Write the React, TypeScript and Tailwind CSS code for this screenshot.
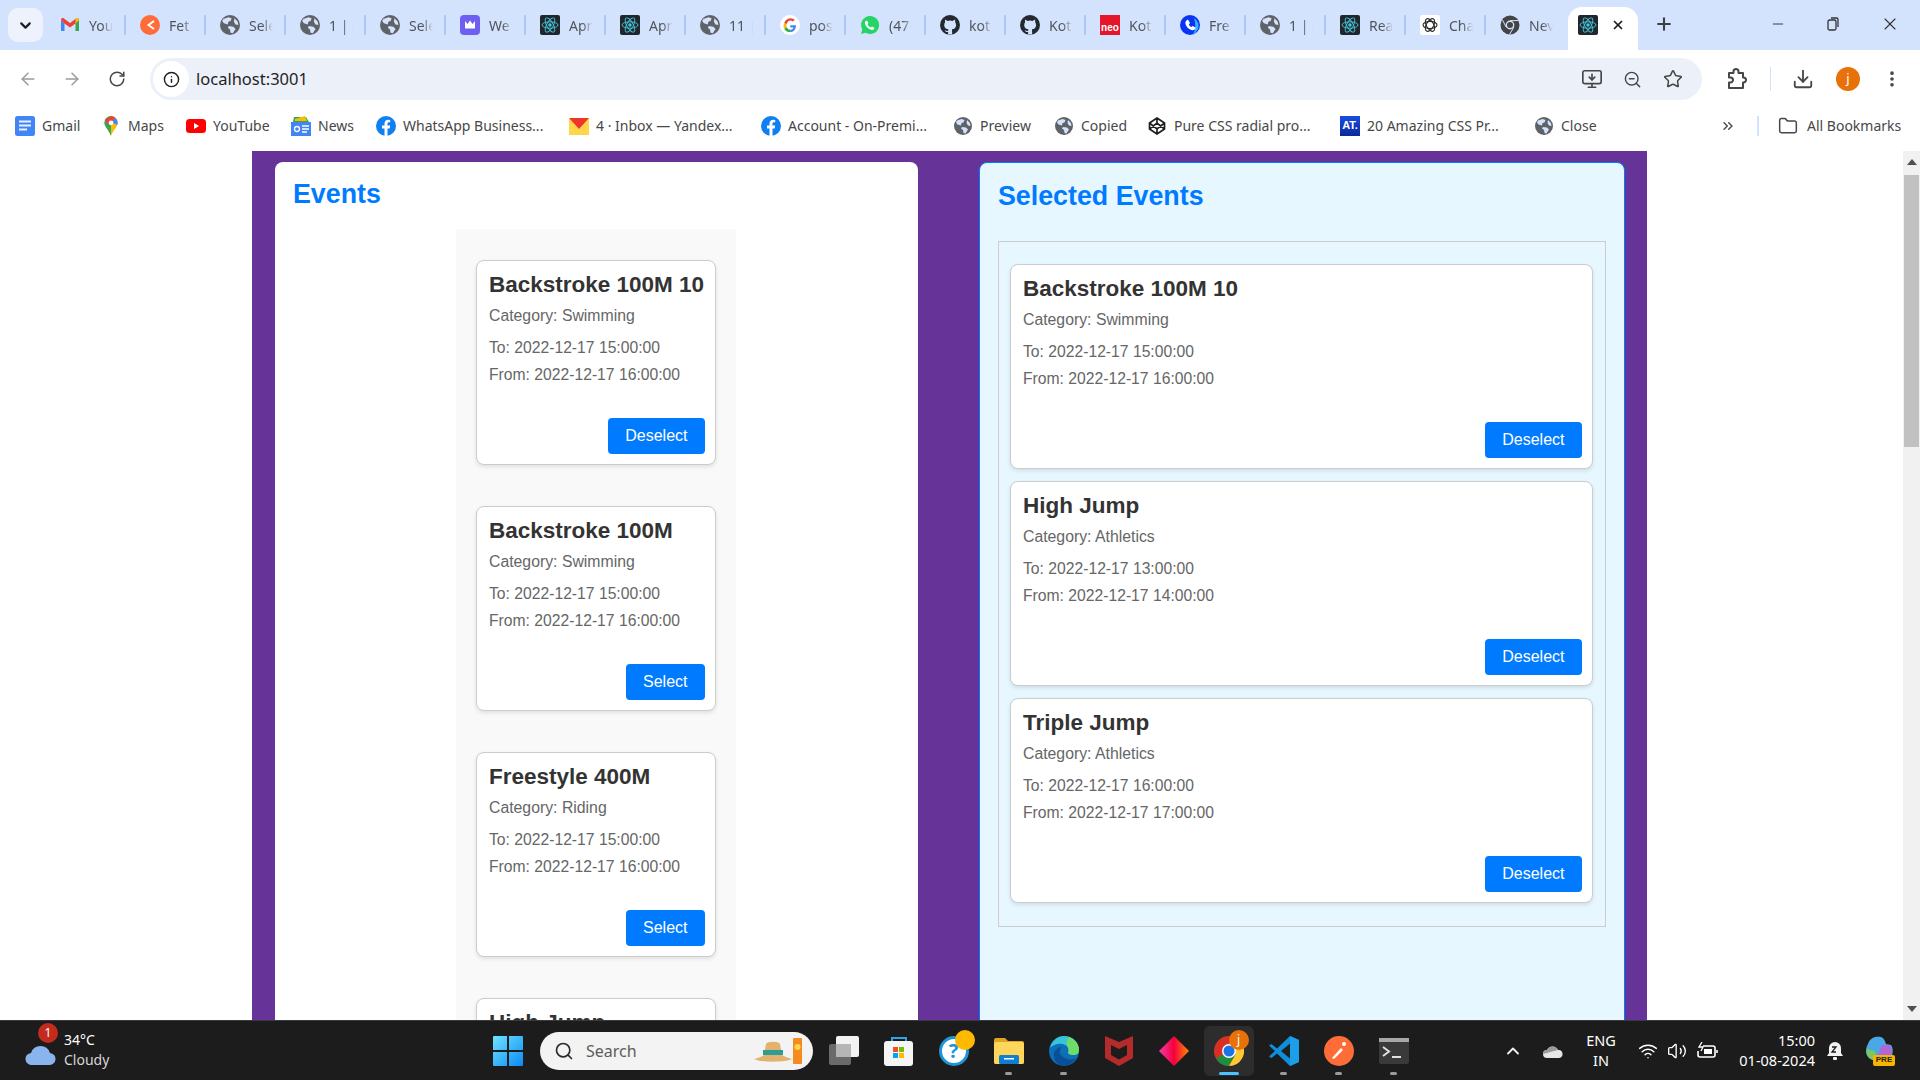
import type { ReactNode } from "react";
import {
  ArrowLeft,
  ArrowRight,
  ChevronDown,
  ChevronsRight,
  ChevronUp,
  Download,
  EllipsisVertical,
  Folder,
  Info,
  Minus,
  MonitorDown,
  Plus,
  RotateCw,
  Search,
  Star,
  Volume2,
  Wifi,
  X,
  ZoomOut,
} from "lucide-react";

const uiFont = "font-['Noto_Sans',sans-serif]";

function Globe({ size = 18 }: { size?: number }) {
  return (
    <svg width={size} height={size} viewBox="0 0 18 18">
      <circle cx="9" cy="9" r="9" fill="#5f6368" />
      <path d="M3 3.5 7.5 2l3 1-1 2.5-2 .5L7 8.5 3.5 7.5 2 5.5ZM8 10l4 .5 2 2-2.5 4-2-.5-.5-3-2-1.5ZM13 3l3 3 .5 3-2.5-.5-1.5-2.5Z" fill="#d3e3fd" />
    </svg>
  );
}

function ReactIcon({ size = 20 }: { size?: number }) {
  return (
    <svg width={size} height={size} viewBox="0 0 20 20" className="rounded-[2px] bg-[#20262b]">
      <g fill="none" stroke="#45c8dc" strokeWidth="0.9">
        <ellipse cx="10" cy="10" rx="8" ry="3.2" />
        <ellipse cx="10" cy="10" rx="8" ry="3.2" transform="rotate(60 10 10)" />
        <ellipse cx="10" cy="10" rx="8" ry="3.2" transform="rotate(120 10 10)" />
      </g>
      <circle cx="10" cy="10" r="1.7" fill="#45c8dc" />
    </svg>
  );
}

function GmailIcon() {
  return (
    <svg width="20" height="20" viewBox="0 0 20 20">
      <path d="M1 5v11h3.5V8.5Z" fill="#4285f4" />
      <path d="M19 5v11h-3.5V8.5Z" fill="#34a853" />
      <path d="M1 5c0-1.8 1.8-2.4 3-1.5L10 8l6-4.5c1.2-.9 3-.3 3 1.5l-3.5 3.5L10 12.5 4.5 8.5Z" fill="#ea4335" />
      <path d="M15.5 8.5 19 5c0-1.8-1.8-2.4-3-1.5l-.5.4Z" fill="#fbbc04" />
    </svg>
  );
}

function OrangeIcon() {
  return (
    <svg width="20" height="20" viewBox="0 0 20 20">
      <circle cx="10" cy="10" r="10" fill="#ff6c37" />
      <path d="M14 6 8.5 10l5.5 4" fill="none" stroke="#fff" strokeWidth="2" />
    </svg>
  );
}

function CrownIcon() {
  return (
    <svg width="20" height="20" viewBox="0 0 20 20">
      <rect width="20" height="20" rx="4" fill="#6f5ff0" />
      <path d="M5 6l2.5 3L10 5.500 12.500 9 15 6v7.500H5Z" fill="#fff" />
    </svg>
  );
}

function GoogleIcon() {
  return (
    <svg width="20" height="20" viewBox="0 0 20 20">
      <circle cx="10" cy="10" r="10" fill="#fff" />
      <path d="M16 10.200h-5.700v2.300h3.200c-.5 1.500-1.700 2.200-3.300 2.200V17c2.800 0 5.800-2 5.800-6.800Z" fill="#4285f4" />
      <path d="M10.200 14.700c-1.700 0-3.100-1.100-3.600-2.600l-2.300 1.800c1 2 3.300 3.100 5.900 3.100Z" fill="#34a853" />
      <path d="M6.600 12.100a4.400 4.400 0 0 1 0-2.800L4.300 7.500a7 7 0 0 0 0 6.400Z" fill="#fbbc04" />
      <path d="M10.200 5.600c1.100 0 2 .4 2.700 1l1.900-1.900A6.700 6.700 0 0 0 4.300 7.500l2.300 1.800c.5-2 2-3.700 3.600-3.700Z" fill="#ea4335" />
    </svg>
  );
}

function WhatsAppIcon() {
  return (
    <svg width="20" height="20" viewBox="0 0 20 20">
      <path d="M10 1a9 9 0 0 0-7.700 13.500L1 19l4.600-1.200A9 9 0 1 0 10 1Z" fill="#25d366" />
      <path d="M7 5.500 8.500 8l-1 1.200c.7 1.500 1.800 2.600 3.300 3.300l1.200-1 2.500 1.500c-.3 1.700-2 2.300-3.500 1.800-3-1-5-3-6-6-.4-1.400.3-2.900 2-3.300Z" fill="#fff" />
    </svg>
  );
}

function GithubIcon() {
  return (
    <svg width="20" height="20" viewBox="0 0 20 20">
      <circle cx="10" cy="10" r="10" fill="#24292f" />
      <path d="M5 4.500 7.500 6a8 8 0 0 1 5 0L15 4.500l.3 3c1.200 1.500 1 4.500-.5 5.700-.7.600-1.600.9-2.800 1l.2 5.300H8l.2-2.500c-2 .3-3-.5-3.500-2 1 .3 2 1.500 3.500.8l.1-1.600c-1.200-.1-2.100-.4-2.800-1C4 12 3.800 9 5 7.500Z" fill="#d3e3fd" />
    </svg>
  );
}

function NeoIcon() {
  return (
    <span className="flex h-[20px] w-[20px] items-end justify-center bg-[#e3162b] pb-[1px] font-['Liberation_Sans',sans-serif] text-[10px] font-bold leading-[12px] text-white">
      neo
    </span>
  );
}

function PhoneIcon() {
  return (
    <svg width="20" height="20" viewBox="0 0 20 20">
      <circle cx="10" cy="10" r="10" fill="#0a35f0" />
      <path d="M14 3a10 10 0 0 1 4 11l-3 4a10 10 0 0 1-3 2c4-3 4-11 2-17Z" fill="#35b5ff" />
      <path d="M8 4.500 10 8l-1.200 1.500c.5 1.200 1.300 2 2.500 2.500L12.800 11l3 1.700c-.3 2-2.400 3-4.500 2.200C8.300 13.800 6.500 12 5.500 9 5 7 6 5 8 4.500Z" fill="#fff" />
    </svg>
  );
}

function OpenAiIcon() {
  return (
    <svg width="20" height="20" viewBox="0 0 20 20" className="rounded-[2px] bg-white">
      <g fill="none" stroke="#2b2b2b" strokeWidth="1.100">
        <ellipse cx="10" cy="10" rx="7" ry="3.600" />
        <ellipse cx="10" cy="10" rx="7" ry="3.600" transform="rotate(60 10 10)" />
        <ellipse cx="10" cy="10" rx="7" ry="3.600" transform="rotate(120 10 10)" />
      </g>
    </svg>
  );
}

function ChromeMono() {
  return (
    <svg width="20" height="20" viewBox="0 0 20 20">
      <circle cx="10" cy="10" r="9.500" fill="#444" />
      <circle cx="10" cy="10" r="4.400" fill="#d3e3fd" />
      <circle cx="10" cy="10" r="3" fill="#444" />
      <path d="M10 5.600h8.500M6.200 12.200 2.500 5M13.800 12.200 9.500 19.500" stroke="#d3e3fd" strokeWidth="1" />
    </svg>
  );
}

const tabs: { label: string; icon: ReactNode }[] = [
  { label: "You", icon: <GmailIcon /> },
  { label: "Fet", icon: <OrangeIcon /> },
  { label: "Sele", icon: <Globe size={20} /> },
  { label: "1 | (", icon: <Globe size={20} /> },
  { label: "Sele", icon: <Globe size={20} /> },
  { label: "We", icon: <CrownIcon /> },
  { label: "Apr", icon: <ReactIcon /> },
  { label: "Apr", icon: <ReactIcon /> },
  { label: "11 |", icon: <Globe size={20} /> },
  { label: "pos", icon: <GoogleIcon /> },
  { label: "(47", icon: <WhatsAppIcon /> },
  { label: "kot", icon: <GithubIcon /> },
  { label: "Kot", icon: <GithubIcon /> },
  { label: "Kot", icon: <NeoIcon /> },
  { label: "Fre", icon: <PhoneIcon /> },
  { label: "1 | (", icon: <Globe size={20} /> },
  { label: "Rea", icon: <ReactIcon /> },
  { label: "Cha", icon: <OpenAiIcon /> },
  { label: "Nev", icon: <ChromeMono /> },
];

function TabStrip() {
  return (
    <div className={`flex h-[50px] items-end bg-[#d3e3fd] ${uiFont}`}>
      <div className="mb-[8px] ml-2 mr-[3px] flex h-[34px] w-[35px] items-center justify-center rounded-[10px] bg-[#edf2fd]">
        <ChevronDown size={17} strokeWidth={3} className="text-[#1f1f1f]" />
      </div>
      {tabs.map((tab, i) => (
        <div key={i} className="mb-[8px] flex h-[34px] w-[80px] items-center pl-[14px]">
          <span className="flex w-[20px] shrink-0 justify-center">{tab.icon}</span>
          <span className="ml-[9px] w-[24px] overflow-hidden whitespace-nowrap text-[14px] text-[#50545a] [mask-image:linear-gradient(to_right,black_55%,transparent)]">
            {tab.label}
          </span>
          {i < tabs.length - 1 && (
            <span className="ml-[11px] h-[20px] w-[2px] shrink-0 rounded bg-[#a8c7fa]" />
          )}
        </div>
      ))}
      <div className="ml-[2px] flex h-[43px] w-[70px] items-center rounded-t-[14px] bg-white pb-[7px] pl-[10px]">
        <ReactIcon />
        <X size={14} strokeWidth={3} className="ml-[13px] text-[#1f1f1f]" />
      </div>
      <Plus size={20} strokeWidth={2.5} className="mb-[16px] ml-[16px] text-[#3c4043]" />
      <div className="mb-[16px] ml-[96px] flex items-center text-[#333]">
        <Minus size={16} strokeWidth={1.4} />
        <svg width="14" height="14" viewBox="0 0 14 14" className="ml-[40px]" fill="none" stroke="#333" strokeWidth="1.300">
          <rect x="2" y="3" width="8" height="10" rx="1.5" />
          <path d="M5 1h5.500A1.500 1.500 0 0 1 12 2.500V10" />
        </svg>
        <X size={20} strokeWidth={1.3} className="ml-[40px]" />
      </div>
    </div>
  );
}

function ExtensionIcon() {
  return (
    <svg width="22" height="24" viewBox="0 0 22 24" fill="none" stroke="#474747" strokeWidth="2" className="ml-[24px]">
      <path d="M3 6h4.500V4.500a2.500 2.500 0 0 1 5 0V6H17v4.500h.5a2.500 2.500 0 0 1 0 5H17V21H3v-5.500h1.500a2.500 2.500 0 0 0 0-5H3Z" strokeLinejoin="round" />
    </svg>
  );
}

function Toolbar() {
  return (
    <div className={`flex h-[50px] items-center bg-white pt-[8px] ${uiFont}`}>
      <ArrowLeft size={20} strokeWidth={1.8} className="ml-[18px] text-[#9a9b9d]" />
      <ArrowRight size={20} strokeWidth={1.8} className="ml-[24px] text-[#9a9b9d]" />
      <RotateCw size={18} strokeWidth={2} className="ml-[26px] text-[#474747]" />
      <div className="ml-[24px] flex h-[42px] w-[1552px] items-center rounded-full bg-[#ecf0f8]">
        <div className="ml-[3px] flex h-[36px] w-[36px] items-center justify-center rounded-full bg-white">
          <Info size={17} strokeWidth={2} className="text-[#1f1f1f]" />
        </div>
        <span className="ml-[7px] text-[16.5px] text-[#1f1f1f]">localhost:3001</span>
        <MonitorDown size={22} strokeWidth={1.8} className="ml-auto text-[#474747]" />
        <ZoomOut size={19} strokeWidth={1.8} className="ml-[20px] text-[#474747]" />
        <Star size={20} strokeWidth={1.8} className="ml-[21px] mr-[19px] text-[#474747]" />
      </div>
      <ExtensionIcon />
      <span className="ml-[22px] h-[24px] w-px bg-[#d3e3fd]" />
      <Download size={22} strokeWidth={2} className="ml-[21px] text-[#474747]" />
      <div className="ml-[22px] flex h-[24px] w-[24px] items-center justify-center rounded-full bg-[#e8710a] text-[13px] text-white">
        j
      </div>
      <EllipsisVertical size={20} strokeWidth={2.4} className="ml-[22px] text-[#474747]" />
    </div>
  );
}

function DocIcon() {
  return (
    <svg width="20" height="20" viewBox="0 0 20 20">
      <rect width="20" height="20" rx="2.5" fill="#4285f4" />
      <path d="M4 5.500h12M4 9.500h12M4 13.500h8" stroke="#e8f0fe" strokeWidth="1.800" />
    </svg>
  );
}

function MapsIcon() {
  return (
    <svg width="20" height="20" viewBox="0 0 20 20">
      <path d="M10 0a6.700 6.700 0 0 0-6.700 6.700C3.300 11 8 14 10 20Z" fill="#34a853" />
      <path d="M10 0a6.700 6.700 0 0 1 6.700 6.700C16.700 11 12 14 10 20Z" fill="#fbbc04" />
      <path d="M4 3.500 10 0c2 0 3.500 1 4.500 2L7 9Z" fill="#ea4335" />
      <path d="M14.500 2c2 2 2.700 4.500 1.800 7L10 6Z" fill="#4285f4" />
      <circle cx="10" cy="6.800" r="2.400" fill="#fff" />
    </svg>
  );
}

function YoutubeIcon() {
  return (
    <svg width="20" height="20" viewBox="0 0 20 20">
      <rect y="3" width="20" height="14" rx="3.5" fill="#f00" />
      <path d="M8 7l5.200 3L8 13Z" fill="#fff" />
    </svg>
  );
}

function NewsIcon() {
  return (
    <svg width="20" height="20" viewBox="0 0 20 20">
      <path d="M2 6 3 1h12l3 5Z" fill="#34a853" />
      <path d="M4 3 14 0l2 5H4Z" fill="#fbbc04" />
      <rect y="6" width="20" height="14" fill="#4285f4" />
      <path d="M11 10h7M11 13h7M11 16h5" stroke="#fff" strokeWidth="1.300" />
      <circle cx="6" cy="13" r="2.5" fill="none" stroke="#fff" strokeWidth="1.300" />
    </svg>
  );
}

function FacebookIcon() {
  return (
    <svg width="20" height="20" viewBox="0 0 20 20">
      <circle cx="10" cy="10" r="10" fill="#0f7ff2" />
      <path d="M8.500 20v-7.500H6V9.500h2.500V7.500c0-2.500 1.500-3.800 3.700-3.800l2 .2V6.300h-1.200c-1.200 0-1.500.7-1.500 1.500v1.700h2.700l-.5 3h-2.200V20Z" fill="#fff" />
    </svg>
  );
}

function YandexIcon() {
  return (
    <svg width="20" height="20" viewBox="0 0 20 20">
      <rect y="2" width="20" height="17" fill="#ffd54a" />
      <path d="M0 2h20L10 13Z" fill="#f1352b" />
    </svg>
  );
}

function CodepenIcon() {
  return (
    <svg width="18" height="18" viewBox="0 0 18 18" fill="none" stroke="#1f1f1f" strokeWidth="1.700">
      <path d="M9 1l7.500 5v6L9 17l-7.500-5V6ZM9 1v5M9 12v5M1.500 6 9 12l7.500-6M1.500 12 9 6l7.500 6" />
    </svg>
  );
}

function AtIcon() {
  return (
    <span className="flex h-[20px] w-[20px] items-center justify-center bg-gradient-to-b from-[#1a4de0] to-[#0a2a9a] font-['Liberation_Sans',sans-serif] text-[11px] font-bold text-white">
      AT.
    </span>
  );
}

const bookmarks: { label: string; width: string; icon: ReactNode }[] = [
  { label: "Gmail", width: "w-[86px]", icon: <DocIcon /> },
  { label: "Maps", width: "w-[85px]", icon: <MapsIcon /> },
  { label: "YouTube", width: "w-[105px]", icon: <YoutubeIcon /> },
  { label: "News", width: "w-[85px]", icon: <NewsIcon /> },
  { label: "WhatsApp Business...", width: "w-[193px]", icon: <FacebookIcon /> },
  { label: "4 · Inbox — Yandex...", width: "w-[192px]", icon: <YandexIcon /> },
  { label: "Account - On-Premi...", width: "w-[192px]", icon: <FacebookIcon /> },
  { label: "Preview", width: "w-[101px]", icon: <Globe /> },
  { label: "Copied", width: "w-[93px]", icon: <Globe /> },
  { label: "Pure CSS radial pro...", width: "w-[193px]", icon: <CodepenIcon /> },
  { label: "20 Amazing CSS Pr...", width: "w-[194px]", icon: <AtIcon /> },
  { label: "Close", width: "w-[100px]", icon: <Globe /> },
];

function BookmarksBar() {
  return (
    <div className={`flex h-[51px] items-center bg-white pl-[15px] ${uiFont}`}>
      {bookmarks.map((b) => (
        <div key={b.label} className={`flex items-center ${b.width}`}>
          <span className="flex w-[20px] shrink-0 justify-center">{b.icon}</span>
          <span className="ml-[7px] whitespace-nowrap text-[14px] text-[#474747]">{b.label}</span>
        </div>
      ))}
      <ChevronsRight size={16} strokeWidth={2} className="ml-[86px] text-[#474747]" />
      <span className="ml-[21px] h-[20px] w-[2px] bg-[#d3e3fd]" />
      <Folder size={20} strokeWidth={1.8} className="ml-[19px] text-[#474747]" />
      <span className="ml-[9px] whitespace-nowrap text-[14px] text-[#474747]">All Bookmarks</span>
    </div>
  );
}

interface EventItem {
  title: string;
  category: string;
  to: string;
  from: string;
  selected: boolean;
}

const events: EventItem[] = [
  { title: "Backstroke 100M 10", category: "Swimming", to: "2022-12-17 15:00:00", from: "2022-12-17 16:00:00", selected: true },
  { title: "Backstroke 100M", category: "Swimming", to: "2022-12-17 15:00:00", from: "2022-12-17 16:00:00", selected: false },
  { title: "Freestyle 400M", category: "Riding", to: "2022-12-17 15:00:00", from: "2022-12-17 16:00:00", selected: false },
  { title: "High Jump", category: "Athletics", to: "2022-12-17 13:00:00", from: "2022-12-17 14:00:00", selected: true },
];

const selectedEvents: EventItem[] = [
  events[0],
  events[3],
  { title: "Triple Jump", category: "Athletics", to: "2022-12-17 16:00:00", from: "2022-12-17 17:00:00", selected: true },
];

function EventCard({ event }: { event: EventItem }) {
  return (
    <div className="flex h-[205px] shrink-0 flex-col rounded-[8px] border border-[#cccccc] bg-white pb-[10px] pl-[10px] pr-[10px] pt-[11px] shadow-[0_2px_4px_rgba(0,0,0,0.1)]">
      <h3 className="h-[26px] whitespace-nowrap pl-[2px] text-[22.5px] font-bold leading-[26px] text-[#333333]">{event.title}</h3>
      <p className="mt-[8px] pl-[2px] text-[15.8px] leading-[20px] text-[#666666]">Category: {event.category}</p>
      <p className="mt-[12px] pl-[2px] text-[15.7px] leading-[20px] text-[#666666]">To: {event.to}</p>
      <p className="mt-[7px] pl-[2px] text-[15.7px] leading-[20px] text-[#666666]">From: {event.from}</p>
      <button
        type="button"
        className="ml-auto mt-auto h-[36px] rounded-[4px] bg-[#007bff] px-[17.5px] text-[16px] text-white"
      >
        {event.selected ? "Deselect" : "Select"}
      </button>
    </div>
  );
}

function EventsPage() {
  return (
    <div className="flex min-h-0 flex-1 overflow-hidden bg-white font-['Liberation_Sans',sans-serif]">
      <div className="ml-[252px] flex w-[1395px] items-start justify-between bg-[#663399] pl-[23px] pr-[22px] pt-[11px]">
        <section className="h-[1200px] w-[643px] rounded-t-[8px] bg-white px-[18px] pt-[17px]">
          <h2 className="text-[26.8px] font-bold leading-[30px] text-[#007bff]">Events</h2>
          <div className="ml-[163px] mt-[20px] flex w-[280px] flex-col gap-[41px] bg-[#f9f9f9] px-[20px] pb-[40px] pt-[31px]">
            {events.map((event) => (
              <EventCard key={event.title} event={event} />
            ))}
          </div>
        </section>
        <section className="h-[1200px] w-[646px] rounded-t-[8px] border border-[#007bff] bg-[#e6f7ff] px-[18px] pt-[18px]">
          <h2 className="text-[26.8px] font-bold leading-[30px] text-[#007bff]">Selected Events</h2>
          <div className="mt-[30px] flex flex-col gap-[12px] border border-[#cccccc] pb-[23px] pl-[11px] pr-[12px] pt-[22px]">
            {selectedEvents.map((event) => (
              <EventCard key={event.title} event={event} />
            ))}
          </div>
        </section>
      </div>
      <div className="ml-auto flex w-[17px] flex-col items-center bg-[#f1f1f1]">
        <span className="mt-[8px] h-0 w-0 border-x-[5px] border-b-[6px] border-x-transparent border-b-[#505050]" />
        <span className="mt-[10px] h-[272px] w-[15px] bg-[#c1c1c1]" />
        <span className="mb-[8px] mt-auto h-0 w-0 border-x-[5px] border-t-[6px] border-x-transparent border-t-[#505050]" />
      </div>
    </div>
  );
}

function StartIcon() {
  return (
    <svg width="30" height="30" viewBox="0 0 30 30">
      <defs>
        <linearGradient id="win" x1="0" y1="0" x2="1" y2="1">
          <stop offset="0" stopColor="#6fe3ff" />
          <stop offset="1" stopColor="#0a8bf5" />
        </linearGradient>
      </defs>
      <path d="M0 1a1 1 0 0 1 1-1h13v14H0ZM16 0h13a1 1 0 0 1 1 1v13H16ZM0 16h14v14H1a1 1 0 0 1-1-1ZM16 16h14v13a1 1 0 0 1-1 1H16Z" fill="url(#win)" />
    </svg>
  );
}

function TaskView() {
  return (
    <svg width="30" height="30" viewBox="0 0 30 30">
      <rect x="0" y="8" width="22" height="21" rx="2" fill="#6a6a6a" />
      <rect x="7" y="0" width="23" height="21" rx="2" fill="#f2f2f2" />
      <rect x="7" y="8" width="15" height="13" fill="#b5b5b5" />
    </svg>
  );
}

function StoreIcon() {
  return (
    <svg width="30" height="30" viewBox="0 0 30 30">
      <path d="M8 7V2h14v5" fill="none" stroke="#2ba5e8" strokeWidth="2" />
      <rect y="5" width="29" height="25" rx="3" fill="#f5f5f5" />
      <rect x="9" y="11" width="5" height="5" fill="#f25022" />
      <rect x="15" y="11" width="5" height="5" fill="#7fba00" />
      <rect x="9" y="17" width="5" height="5" fill="#00a4ef" />
      <rect x="15" y="17" width="5" height="5" fill="#ffb900" />
    </svg>
  );
}

function HelpIcon() {
  return (
    <span className="relative flex h-[30px] w-[30px] items-center justify-center rounded-full border-[3px] border-[#1c96d8] bg-white text-[20px] font-bold leading-none text-[#1c96d8]">
      ?
      <span className="absolute -right-[9px] -top-[9px] h-[20px] w-[20px] rounded-full bg-[#ffb900]" />
    </span>
  );
}

function FolderIcon() {
  return (
    <svg width="30" height="26" viewBox="0 0 30 26">
      <path d="M0 2a2 2 0 0 1 2-2h9l3 3h14a2 2 0 0 1 2 2v19a2 2 0 0 1-2 2H2a2 2 0 0 1-2-2Z" fill="#e0a526" />
      <rect y="4" width="30" height="22" rx="2" fill="#ffd65c" />
      <rect x="5" y="17" width="20" height="9" rx="1.5" fill="#0f7fd6" />
      <rect x="10" y="20" width="10" height="1.5" fill="#ffffff" />
    </svg>
  );
}

function EdgeIcon() {
  return (
    <svg width="30" height="30" viewBox="0 0 30 30">
      <circle cx="15" cy="15" r="15" fill="#0c6fb8" />
      <path d="M1 12C3 4 9 0 15 0c8 0 15 6 15 14 0 3-2 5-6 5-3 0-5-1-5-3 1-1 1-3 0-5-3-4-12-5-18 1Z" fill="#37c3d8" />
      <path d="M20 1c6 2 10 7 10 13 0 3-2 5-6 5-2 0-4-1-5-2 1-2 1-4-1-7-1-3 0-7 2-9Z" fill="#6fdc6a" />
      <path d="M14 30C8 29 4 24 5 17c1-3 4-6 8-6-3 2-3 8 1 10 4 3 10 3 13 1-3 5-8 8-13 8Z" fill="#0b4f98" />
    </svg>
  );
}

function McAfeeIcon() {
  return (
    <svg width="28" height="30" viewBox="0 0 28 30">
      <path d="M0 0l7 3 7 3 7-3 7-3v22l-14 8L0 22Zm6 9v10l8 4.500 8-4.500V9l-8 4Z" fill="#b52b2b" />
    </svg>
  );
}

function DiamondIcon() {
  return (
    <svg width="30" height="30" viewBox="0 0 30 30">
      <defs>
        <linearGradient id="dia" x1="0" y1="0" x2="1" y2="0">
          <stop offset="0" stopColor="#f53ca8" />
          <stop offset="0.5" stopColor="#f5003c" />
          <stop offset="1" stopColor="#ff8a00" />
        </linearGradient>
      </defs>
      <path d="M15 0l15 15-15 15L0 15Z" fill="url(#dia)" />
    </svg>
  );
}

function ChromeIcon() {
  return (
    <span className="relative flex h-[50px] w-[50px] flex-col items-center justify-center rounded-[6px] bg-[#2d2d2d]">
      <svg width="30" height="30" viewBox="0 0 30 30">
        <circle cx="15" cy="15" r="15" fill="#d93025" />
        <path d="M2 22.500A15 15 0 0 0 15 30l6.500-11.500h-12Z" fill="#1e8e3e" />
        <path d="M15 30A15 15 0 0 0 28 7.500H15l6.500 11Z" fill="#fcc934" />
        <circle cx="15" cy="15" r="7" fill="#fff" />
        <circle cx="15" cy="15" r="5.500" fill="#1a73e8" />
      </svg>
      <span className="absolute right-[5px] top-[4px] flex h-[20px] w-[20px] items-center justify-center rounded-full bg-[#e8710a] text-[12px] text-white">
        j
      </span>
      <span className="absolute bottom-[1px] h-[3px] w-[20px] rounded-full bg-[#4cc2ff]" />
    </span>
  );
}

function VsCodeIcon() {
  return (
    <svg width="30" height="30" viewBox="0 0 30 30">
      <path d="M21 0l9 4v22l-9 4L8 17.500 2.500 22 0 20.500 6 15 0 9.500 2.500 8 8 12.500Z" fill="#0e8fdc" />
      <path d="M21 7.500 12 15l9 7.500Z" fill="#1f1f1f" />
      <path d="M21 0l9 4v22l-9 4Z" fill="#1fa3ec" opacity="0.8" />
    </svg>
  );
}

function PostmanIcon() {
  return (
    <svg width="30" height="30" viewBox="0 0 30 30">
      <circle cx="15" cy="15" r="15" fill="#ff6c37" />
      <path d="M8 22l9-10 2 2-9 9Z" fill="#fff" />
      <circle cx="20" cy="8" r="2" fill="#fff" />
    </svg>
  );
}

function TerminalIcon() {
  return (
    <svg width="30" height="26" viewBox="0 0 30 26">
      <rect width="30" height="26" rx="2" fill="#3a3a3a" />
      <rect width="30" height="4" fill="#a8a8a8" />
      <path d="M4 9l6 4.500L4 18" fill="none" stroke="#e0e0e0" strokeWidth="2" />
      <rect x="13" y="18" width="9" height="2" fill="#e0e0e0" />
    </svg>
  );
}

const taskApps: { icon: ReactNode; running?: boolean }[] = [
  { icon: <TaskView /> },
  { icon: <StoreIcon /> },
  { icon: <HelpIcon /> },
  { icon: <FolderIcon />, running: true },
  { icon: <EdgeIcon />, running: true },
  { icon: <McAfeeIcon /> },
  { icon: <DiamondIcon /> },
  { icon: <ChromeIcon /> },
  { icon: <VsCodeIcon />, running: true },
  { icon: <PostmanIcon />, running: true },
  { icon: <TerminalIcon />, running: true },
];

function Taskbar() {
  return (
    <div className={`flex h-[60px] shrink-0 items-center border-t border-[#3a3a3a] bg-[#1c1c1c] text-white ${uiFont}`}>
      <div className="relative ml-[25px] flex w-[455px] items-center">
        <svg width="32" height="24" viewBox="0 0 32 24" className="mt-[4px]">
          <path d="M7 24a6 6 0 0 1-1-12 10 10 0 0 1 19 0 6 6 0 0 1-1 12Z" fill="#8ab4ee" />
        </svg>
        <span className="absolute -top-[7px] left-[13px] flex h-[20px] w-[20px] items-center justify-center rounded-full bg-[#c42b1c] text-[12px]">
          1
        </span>
        <div className="mb-[2px] ml-[7px] flex flex-col text-[14px] leading-[20px]">
          <span>34°C</span>
          <span className="text-[#d5d5d5]">Cloudy</span>
        </div>
      </div>
      <div className="flex w-[55px] justify-center">
        <StartIcon />
      </div>
      <div className="ml-[5px] flex h-[38px] w-[273px] items-center rounded-full bg-[#f3f3f3] pl-[14px]">
        <Search size={20} strokeWidth={2} className="text-[#2b2b2b]" />
        <span className="ml-[12px] text-[16px] text-[#5d5d5d]">Search</span>
        <svg width="48" height="30" viewBox="0 0 48 30" className="ml-auto mr-[11px]">
          <path d="M0 23c6-1 8-3 10-4l2-11c1-3 13-3 14 0l2 11c2 1 6 3 10 4-4 3-30 4-38 0Z" fill="#e3b26e" />
          <rect x="9" y="14" width="20" height="5" fill="#2c9e95" />
          <rect x="39" y="2" width="9" height="26" rx="1" fill="#f58a1f" />
          <circle cx="43.5" cy="11" r="3" fill="#ffd84a" />
        </svg>
      </div>
      <div className="ml-[3px] flex">
        {taskApps.map((app, i) => (
          <div key={i} className="relative flex h-[50px] w-[55px] items-center justify-center">
            {app.icon}
            {app.running && (
              <span className="absolute bottom-[1px] h-[3px] w-[7px] rounded-full bg-[#9b9b9b]" />
            )}
          </div>
        ))}
      </div>
      <ChevronUp size={20} strokeWidth={2.2} className="ml-[82px] text-[#f0f0f0]" />
      <svg width="20" height="14" viewBox="0 0 20 14" className="ml-[20px]">
        <path d="M4 14a4 4 0 0 1 0-8 6 6 0 0 1 11 0 4 4 0 0 1 1 8Z" fill="#e6e6e6" />
        <path d="M0 10a4 4 0 0 1 4-4 6 6 0 0 1 11 0Z" fill="#9a9a9a" />
      </svg>
      <div className="mb-[2px] ml-[20px] flex w-[36px] flex-col items-center text-[14.5px] leading-[20px]">
        <span>ENG</span>
        <span>IN</span>
      </div>
      <Wifi size={20} strokeWidth={1.8} className="ml-[19px]" />
      <Volume2 size={20} strokeWidth={1.6} className="ml-[9px]" />
      <svg width="22" height="18" viewBox="0 0 22 18" className="ml-[9px]" fill="none" stroke="#fff" strokeWidth="1.600">
        <path d="M7 4h10a2 2 0 0 1 2 2v7a2 2 0 0 1-2 2H4a2 2 0 0 1-2-2V9" />
        <rect x="8" y="7" width="8" height="5" fill="#fff" stroke="none" />
        <path d="M21 8v3" />
        <path d="M6 0 3 5h4l-2 4" strokeWidth="1.300" />
      </svg>
      <div className="mb-[2px] ml-auto flex flex-col items-end text-[14.5px] leading-[20px]">
        <span>15:00</span>
        <span>01-08-2024</span>
      </div>
      <svg width="18" height="24" viewBox="0 0 18 24" className="ml-[11px]">
        <path d="M9 3a6 6 0 0 1 6 6v5l2 3H1l2-3V9a6 6 0 0 1 6-6Z" fill="#f2f2f2" />
        <rect x="7" y="18" width="4" height="3" rx="1" fill="#f2f2f2" />
        <path d="M6 8h4l-4 5h4" fill="none" stroke="#1c1c1c" strokeWidth="1.300" />
      </svg>
      <div className="relative ml-[21px] mr-[25px] h-[30px] w-[30px]">
        <svg width="30" height="26" viewBox="0 0 30 26">
          <path d="M3 8c2-7 9-8 13-7 3 1 4 4 5 7l5 1c3 4 2 12-2 15H8C1 22-1 15 3 8Z" fill="#4aa8e8" />
          <path d="M17 9h7c4 3 3 11-1 15H11Z" fill="#b565d8" />
          <path d="M3 12c2 4 7 1 8 5l-3 7C2 22 0 16 3 12Z" fill="#7dc85a" />
        </svg>
        <span className="absolute bottom-0 right-0 flex h-[11px] w-[22px] items-center justify-center rounded-[2px] bg-[#f7b500] font-['Liberation_Sans',sans-serif] text-[8px] font-bold text-[#222]">
          PRE
        </span>
      </div>
    </div>
  );
}

export default function App() {
  return (
    <div className="flex h-screen w-full flex-col overflow-hidden">
      <TabStrip />
      <Toolbar />
      <BookmarksBar />
      <EventsPage />
      <Taskbar />
    </div>
  );
}
